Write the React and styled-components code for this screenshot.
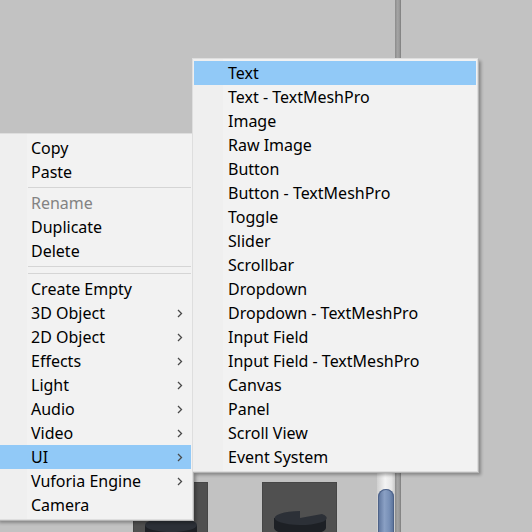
import React from "react";
import styled, { createGlobalStyle } from "styled-components";

const GlobalStyle = createGlobalStyle`
  html, body {
    margin: 0;
    padding: 0;
    background: #c2c2c2;
  }
  body {
    font-family: "Noto Sans", "Noto Sans CJK SC", sans-serif;
  }
`;

const Stage = styled.div`
  position: relative;
  width: 532px;
  height: 532px;
  overflow: hidden;
  display: flex;
  background: #c2c2c2;
`;

const ContentArea = styled.div`
  width: 377px;
  display: flex;
  flex-direction: column;
  justify-content: flex-end;
`;

const ThumbRow = styled.div`
  display: flex;
  gap: 54px;
  padding-left: 133px;
  height: 50px;
`;

const Thumb = styled.div`
  width: 75px;
  height: 60px;
  background: #505050;
  box-shadow: inset 0 0 0 1px #464646;
  display: flex;
  justify-content: center;
  align-items: flex-start;
  padding-top: ${(p) => p.$discTop}px;
  box-sizing: border-box;
`;

const ScrollColumn = styled.div`
  display: flex;
  width: 24px;
`;

const Track = styled.div`
  width: 18px;
  margin-top: 472px;
  background: linear-gradient(to right, #cfcfcf, #f4f4f4 45%, #e6e6e6 80%, #c9c9c9);
  padding: 17px 1px 0 1px;
  box-sizing: border-box;
`;

const ScrollThumb = styled.div`
  height: 60px;
  border-radius: 8px 8px 0 0;
  background: linear-gradient(to right, #5b729a, #8aa0c4 40%, #7890b7 70%, #566d95);
  box-shadow: inset 0 0 0 1px #4d6288;
`;

const Rail = styled.div`
  width: 6px;
  background: linear-gradient(to right, #8a8a8a, #a3a3a3 40%, #9c9c9c 70%, #7c7c7c);
`;

const Menu = styled.div`
  position: absolute;
  left: ${(p) => p.$left}px;
  top: ${(p) => p.$top}px;
  width: ${(p) => p.$width}px;
  box-sizing: border-box;
  padding: 2px 1px;
  background: linear-gradient(to right, #efefef ${(p) => p.$gutter}px, #f2f2f2 ${(p) => p.$gutter}px);
  border: 1px solid #dedede;
  box-shadow: 1px 1px 0 #b4b4b4, 3px 3px 3px rgba(0, 0, 0, 0.3);
  font-size: 16px;
  color: #000;
`;

const Row = styled.div`
  position: relative;
  height: 24px;
  display: flex;
  align-items: center;
  padding-left: ${(p) => p.$indent}px;
  background: ${(p) => (p.$active ? "#91c9f7" : "transparent")};
  color: ${(p) => (p.$disabled ? "#838383" : "#000")};
  white-space: nowrap;
  line-height: 24px;
`;

const Arrow = styled.svg`
  position: absolute;
  right: 8px;
  top: 8px;
  width: 6px;
  height: 9px;
`;

const Separator = styled.div`
  height: 7px;
  display: flex;
  align-items: center;
  padding-left: ${(p) => p.$indent}px;

  &::after {
    content: "";
    flex: 1;
    height: 1px;
    background: #d5d5d5;
  }
`;

const leftItems = [
  { label: "Copy" },
  { label: "Paste" },
  { sep: true },
  { label: "Rename", disabled: true },
  { label: "Duplicate" },
  { label: "Delete" },
  { sep: true },
  { sep: true },
  { label: "Create Empty" },
  { label: "3D Object", sub: true },
  { label: "2D Object", sub: true },
  { label: "Effects", sub: true },
  { label: "Light", sub: true },
  { label: "Audio", sub: true },
  { label: "Video", sub: true },
  { label: "UI", sub: true, active: true },
  { label: "Vuforia Engine", sub: true },
  { label: "Camera" },
];

const uiItems = [
  "Text",
  "Text - TextMeshPro",
  "Image",
  "Raw Image",
  "Button",
  "Button - TextMeshPro",
  "Toggle",
  "Slider",
  "Scrollbar",
  "Dropdown",
  "Dropdown - TextMeshPro",
  "Input Field",
  "Input Field - TextMeshPro",
  "Canvas",
  "Panel",
  "Scroll View",
  "Event System",
];

const Chevron = () => (
  <Arrow viewBox="0 0 6 9">
    <path d="M1 1 L4.5 4.5 L1 8" fill="none" stroke="#4a4a4a" strokeWidth="1.3" />
  </Arrow>
);

const Disc = ({ notch }) => (
  <svg width="56" height="26" viewBox="0 0 56 26">
    <path d="M2 10 L2 20 A26 7 0 0 0 54 20 L54 10 Z" fill="#1d2025" />
    {notch ? (
      <path d="M28 10 L28 3 A26 7 0 1 0 50 6 Z" fill="#2c3037" />
    ) : (
      <ellipse cx="28" cy="10" rx="26" ry="7" fill="#2c3037" />
    )}
  </svg>
);

export default function App() {
  return (
    <>
      <GlobalStyle />
      <Stage>
        <ContentArea>
          <ThumbRow>
            <Thumb $discTop={33}>
              <Disc />
            </Thumb>
            <Thumb $discTop={26}>
              <Disc notch />
            </Thumb>
          </ThumbRow>
        </ContentArea>
        <ScrollColumn>
          <Track>
            <ScrollThumb />
          </Track>
          <Rail />
        </ScrollColumn>

        <Menu $left={-4} $top={133} $width={197} $gutter={30}>
          {leftItems.map((item, i) =>
            item.sep ? (
              <Separator key={i} $indent={30} />
            ) : (
              <Row
                key={i}
                $indent={33}
                $active={item.active}
                $disabled={item.disabled}
              >
                {item.label}
                {item.sub && <Chevron />}
              </Row>
            )
          )}
        </Menu>

        <Menu $left={192} $top={58} $width={286} $gutter={30}>
          {uiItems.map((label, i) => (
            <Row key={label} $indent={34} $active={i === 0}>
              {label}
            </Row>
          ))}
        </Menu>
      </Stage>
    </>
  );
}
